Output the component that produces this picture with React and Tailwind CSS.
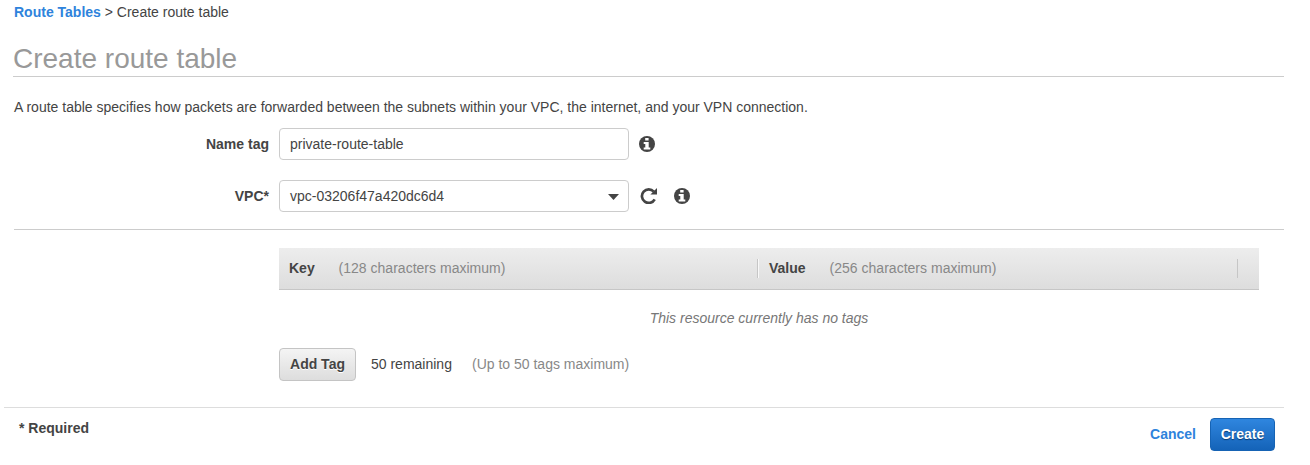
function InfoIcon() {
  return (
    <svg className="mb-px size-[16px] shrink-0" viewBox="0 0 16 16" aria-hidden="true">
      <circle cx="8" cy="8" r="8" fill="#444" />
      <path d="M6.2 1.9h3.4v2.7H6.2zM4.7 6h5v5.6h1.6v2H4.7v-2h1.6V8H4.7z" fill="#fff" />
    </svg>
  );
}

function RefreshIcon() {
  return (
    <svg className="mb-px size-[17px] shrink-0" viewBox="0 0 17 17" aria-hidden="true">
      <path d="M13.8 4.6A6.8 6.8 0 1 0 14.7 12.4" fill="none" stroke="#444" strokeWidth="2.7" />
      <path d="M17 .9V7.5h-6.6z" fill="#444" />
    </svg>
  );
}

function FieldRow({ label, children }) {
  return (
    <div className="flex h-8 items-center">
      <label className="w-[255px] shrink-0 text-right font-bold">{label}</label>
      <div className="ml-[10px] flex items-center">{children}</div>
    </div>
  );
}

export default function App() {
  return (
    <main className="h-[465px] w-[1310px] overflow-hidden bg-white pr-[26px] font-['Liberation_Sans',Arial,sans-serif] text-sm leading-5 text-[#444]">
      <div className="pl-[14px]">
        <nav className="pt-[2px]">
          <a className="font-bold text-[#2e83dc]">Route Tables</a> &gt; Create route table
        </nav>
        <h1 className="-ml-px mt-[20px] h-[35px] border-b border-[#ccc] pt-px text-[28px] leading-8 text-[#999]">Create route table</h1>
        <p className="mt-[20px]">
          A route table specifies how packets are forwarded between the subnets within your VPC, the internet, and your VPN connection.
        </p>
        <div className="mt-[11px] flex flex-col gap-5 border-b border-[#ccc] pb-[17px]">
          <FieldRow label="Name tag">
            <div className="mr-[10px] flex h-8 w-[350px] items-center rounded-[4px] border border-[#ccc] px-[10px]">private-route-table</div>
            <InfoIcon />
          </FieldRow>
          <FieldRow label="VPC*">
            <div className="mr-[11px] flex h-8 w-[350px] items-center justify-between rounded-[4px] border border-[#ccc] pl-[10px] pr-[9px]">
              vpc-03206f47a420dc6d4
              <svg className="mt-px h-[6px] w-[11px] fill-[#444]" viewBox="0 0 11 6" aria-hidden="true">
                <path d="M0 0h11L5.5 6z" />
              </svg>
            </div>
            <RefreshIcon />
            <span className="w-[17px]" />
            <InfoIcon />
          </FieldRow>
        </div>
        <section className="ml-[265px] mt-[18px] w-[980px]">
          <header className="flex h-[42px] items-center border-b border-[#c6c6c6] bg-linear-to-b from-[#ededed] to-[#dddddd]">
            <div className="flex w-[479px] items-center pb-px pl-[10px]">
              <b className="w-[49.5px]">Key</b>
              <span className="tracking-[0.02px] text-[#888]">(128 characters maximum)</span>
            </div>
            <div className="flex h-[19px] w-[480px] items-center border-l border-r border-l-[#f8f8f8] border-r-[#c6c6c6] pb-px pl-[10px] shadow-[-1px_0_0_#c6c6c6]">
              <b className="w-[60.5px]">Value</b>
              <span className="tracking-[0.02px] text-[#888]">(256 characters maximum)</span>
            </div>
          </header>
          <p className="mt-[18px] pr-[20px] text-center italic text-[#777]">This resource currently has no tags</p>
          <div className="mt-[20px] flex h-[33px] items-center">
            <button className="h-[33px] w-[77px] rounded-[4px] border border-[#c4c4c4] bg-linear-to-b from-[#f4f4f4] to-[#dddddd] pb-[2px] font-bold [text-shadow:0_1px_0_#fff]">Add Tag</button>
            <span className="ml-[15px] w-[101px] pb-[2px]">50 remaining</span>
            <span className="pb-[2px] text-[#888]">(Up to 50 tags maximum)</span>
          </div>
        </section>
      </div>
      <footer className="ml-[4px] mt-[26px] flex justify-between border-t border-[#ddd]">
        <span className="pl-[15px] pt-[10px] font-bold">* Required</span>
        <div className="mt-[10px] flex items-center pr-[9px]">
          <a className="mr-[14px] pb-[2px] font-bold text-[#2e83dc]">Cancel</a>
          <button className="h-[33px] w-[65px] rounded-[4px] border border-[#1663b4] bg-linear-to-b from-[#2f86df] to-[#1463b8] pb-[2px] font-bold text-white [text-shadow:0_1px_1px_#0a3a70]">Create</button>
        </div>
      </footer>
    </main>
  );
}
